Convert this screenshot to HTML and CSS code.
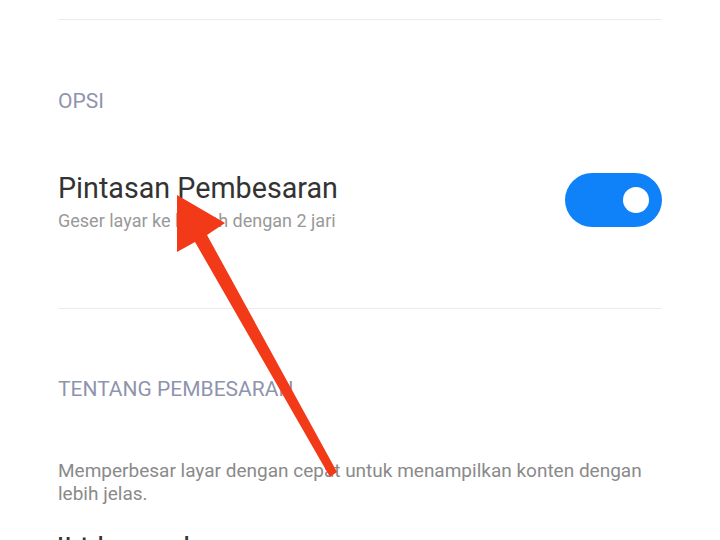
FILE: index.html
```html
<!DOCTYPE html>
<html lang="id">
<head>
  <meta charset="UTF-8">
  <meta name="viewport" content="width=device-width, initial-scale=1.0">
  <title>Pembesaran</title>
  <link rel="stylesheet" href="styles.css">
</head>
<body>
  <div class="page">
    <div class="divider first"></div>

    <div class="section-label opsi">OPSI</div>

    <div class="option-row">
      <div class="option-text">
        <div class="option-title">Pintasan Pembesaran</div>
        <div class="option-sub">Geser layar ke bawah dengan 2 jari</div>
      </div>
      <div class="toggle on"><span class="knob"></span></div>
    </div>

    <div class="divider second"></div>

    <div class="section-label about">TENTANG PEMBESARAN</div>

    <p class="about-text">Memperbesar layar dengan cepat untuk menampilkan konten dengan lebih jelas.</p>
    <p class="about-heading">Untuk memperbesar:</p>
  </div>

  <!-- annotation arrow drawn over the screenshot -->
  <svg class="arrow" width="720" height="540" viewBox="0 0 720 540">
    <polygon points="177,195 225,223 207,235 337,472 330,477 195,242 177,252" fill="#f23a18"/>
  </svg>
</body>
</html>
```

FILE: styles.css
```css
body {
  margin: 0;
  background-color: #fff;
  font-family: Roboto, "Noto Sans", sans-serif;
  overflow: hidden;
}

.page {
  padding: 0 58px;
  height: 540px;
}

.divider {
  height: 1px;
  background-color: #ececec;
}

.divider.first {
  margin-top: 19px;
}

.section-label {
  font-size: 21px;
  line-height: 24px;
  color: #8f94ae;
}

.section-label.opsi {
  margin-top: 69px;
}

.option-row {
  display: flex;
  align-items: center;
  justify-content: space-between;
  margin-top: 59px;
}

.option-title {
  font-size: 28.7px;
  line-height: 32px;
  color: #333;
}

.option-sub {
  margin-top: 6px;
  font-size: 18px;
  line-height: 22px;
  color: #999;
}

.toggle {
  width: 97px;
  height: 54px;
  margin-bottom: 4px;
  border-radius: 27px;
  background-color: #0f82fa;
  display: flex;
  align-items: center;
  justify-content: flex-end;
  padding-right: 13px;
  box-sizing: border-box;
}

.knob {
  width: 26px;
  height: 26px;
  border-radius: 50%;
  background-color: #fff;
}

.divider.second {
  margin-top: 76px;
}

.section-label.about {
  margin-top: 68px;
}

.about-text {
  margin: 58px 0 0;
  font-size: 19px;
  line-height: 23px;
  color: #8a8a8a;
}

.about-heading {
  margin: 27px 0 0;
  font-size: 19px;
  line-height: 24px;
  font-weight: bold;
  color: #333;
}

.arrow {
  position: absolute;
  left: 0;
  top: 0;
}
```
